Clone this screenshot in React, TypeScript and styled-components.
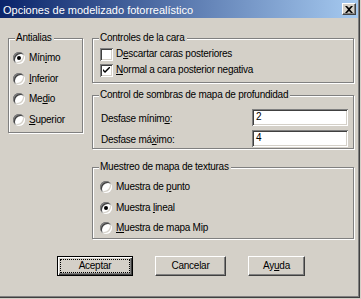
import React from "react";
import styled, { createGlobalStyle, css } from "styled-components";

const Global = createGlobalStyle`
  html, body { margin: 0; padding: 0; background: #d4d0c8; }
  body { font-family: "Liberation Sans", Arial, sans-serif; }
`;

const Window = styled.div`
  width: 361px;
  height: 299px;
  box-sizing: border-box;
  background: #d4d0c8;
  padding: 0 3px 3px 0;
  box-shadow: inset -1px -1px 0 #d4d0c8, inset -2px -2px 0 #404040, inset -3px -3px 0 #808080;
  display: flex;
  flex-direction: column;
  color: #000;
  font-size: 10px;
  letter-spacing: -0.25px;
`;

const TitleBar = styled.div`
  height: 18px;
  flex: none;
  display: flex;
  align-items: center;
  justify-content: space-between;
  padding: 0 2px 0 3px;
  background: linear-gradient(to right, #0a246a, #a6caf0);
`;

const Title = styled.span`
  color: #fff;
  font-size: 11px;
  letter-spacing: 0;
  line-height: 18px;
  padding-top: 1px;
`;

const CloseButton = styled.div`
  width: 14px;
  height: 12px;
  box-sizing: border-box;
  background: #d4d0c8;
  border: 1px solid;
  border-color: #fff #404040 #404040 #fff;
  box-shadow: inset -1px -1px 0 #808080;
  display: flex;
  align-items: center;
  justify-content: center;
`;

const Body = styled.div`
  flex: 1;
  display: flex;
  flex-direction: column;
`;

const Columns = styled.div`
  display: grid;
  grid-template-columns: 75px 262px;
  column-gap: 9px;
  align-items: start;
  padding: 20px 0 0 8px;
`;

const RightColumn = styled.div`
  display: flex;
  flex-direction: column;
`;

const GroupBox = styled.div<{ $h: number; $mt?: number }>`
  box-sizing: border-box;
  height: ${(p) => p.$h}px;
  margin-top: ${(p) => p.$mt ?? 0}px;
  border: 1px solid #808080;
  box-shadow: 1px 1px 0 #fff, inset 1px 1px 0 #fff;
  display: flex;
  flex-direction: column;
`;

const GroupTitle = styled.div`
  align-self: flex-start;
  margin: -7px 0 0 6px;
  padding: 0 2px 0 1px;
  height: 12px;
  line-height: 12px;
  background: #d4d0c8;
`;

const OptionList = styled.div<{ $pt: number; $pl: number; $row: number }>`
  display: flex;
  flex-direction: column;
  padding: ${(p) => p.$pt}px 0 0 ${(p) => p.$pl}px;
  & > * {
    height: ${(p) => p.$row}px;
  }
`;

const Option = styled.label`
  display: flex;
  align-items: center;
  gap: 4px;
  line-height: 12px;
  white-space: nowrap;
`;

const sunken = css`
  background: #fff;
  box-shadow: inset 1px 1px 0 #808080, inset -1px -1px 0 #fff,
    inset 2px 2px 0 #404040, inset -2px -2px 0 #d4d0c8;
`;

const RadioMark = styled.span<{ $on?: boolean }>`
  ${sunken};
  flex: none;
  width: 12px;
  height: 12px;
  border-radius: 50%;
  display: flex;
  align-items: center;
  justify-content: center;
  &::after {
    content: "";
    width: 4px;
    height: 4px;
    border-radius: 50%;
    background: ${(p) => (p.$on ? "#000" : "transparent")};
  }
`;

const CheckMark = styled.span`
  ${sunken};
  flex: none;
  width: 13px;
  height: 13px;
  display: flex;
  align-items: center;
  justify-content: center;
  margin-right: -1px;
`;

const FieldGrid = styled.div`
  display: grid;
  grid-template-columns: 1fr 96px;
  row-gap: 4px;
  align-items: center;
  padding: 8px 5px 0 8px;
`;

const FieldLabel = styled.span`
  line-height: 12px;
  padding-top: 3px;
`;

const TextInput = styled.div`
  ${sunken};
  height: 17px;
  box-sizing: border-box;
  padding: 0 0 0 4px;
  line-height: 16px;
  font-size: 10px;
`;

const ButtonRow = styled.div`
  display: flex;
  gap: 22px;
  padding: 17px 0 0 57px;
`;

const Button = styled.div<{ $w: number; $default?: boolean }>`
  width: ${(p) => p.$w}px;
  height: 20px;
  box-sizing: border-box;
  display: flex;
  align-items: center;
  justify-content: center;
  line-height: 12px;
  background: #d4d0c8;
  ${(p) =>
    p.$default
      ? css`
          border: 1px solid #000;
          box-shadow: inset 1px 1px 0 #fff, inset -1px -1px 0 #404040,
            inset -2px -2px 0 #808080;
          outline: 1px dotted #000;
          outline-offset: -4px;
        `
      : css`
          border: 1px solid;
          border-color: #fff #404040 #404040 #fff;
          box-shadow: inset -1px -1px 0 #808080;
        `}
`;

const Check = () => (
  <svg width="7" height="7" viewBox="0 0 7 7">
    <path d="M0 2 L0 4 L2 6 L7 1 L7 -1 L2 4 Z" fill="#000" />
  </svg>
);

const CloseIcon = () => (
  <svg width="8" height="7" viewBox="0 0 8 7">
    <path d="M0 0h2l2 2 2-2h2L5 3.5 8 7H6L4 5 2 7H0l3-3.5z" fill="#000" />
  </svg>
);

export default function App() {
  return (
    <>
      <Global />
      <Window>
        <TitleBar>
          <Title>Opciones de modelizado fotorrealístico</Title>
          <CloseButton>
            <CloseIcon />
          </CloseButton>
        </TitleBar>
        <Body>
          <Columns>
            <GroupBox $h={95}>
              <GroupTitle>Antialias</GroupTitle>
              <OptionList $pt={3.6} $pl={4} $row={20.7}>
                <Option>
                  <RadioMark $on />
                  <span>
                    Mín<u>i</u>mo
                  </span>
                </Option>
                <Option>
                  <RadioMark />
                  <span>
                    <u>I</u>nferior
                  </span>
                </Option>
                <Option>
                  <RadioMark />
                  <span>
                    Me<u>d</u>io
                  </span>
                </Option>
                <Option>
                  <RadioMark />
                  <span>
                    <u>S</u>uperior
                  </span>
                </Option>
              </OptionList>
            </GroupBox>
            <RightColumn>
              <GroupBox $h={45}>
                <GroupTitle>Controles de la cara</GroupTitle>
                <OptionList $pt={2} $pl={7} $row={16}>
                  <Option>
                    <CheckMark />
                    <span>
                      D<u>e</u>scartar caras posteriores
                    </span>
                  </Option>
                  <Option>
                    <CheckMark>
                      <Check />
                    </CheckMark>
                    <span>
                      <u>N</u>ormal a cara posterior negativa
                    </span>
                  </Option>
                </OptionList>
              </GroupBox>
              <GroupBox $h={54} $mt={12}>
                <GroupTitle>Control de sombras de mapa de profundidad</GroupTitle>
                <FieldGrid>
                  <FieldLabel>
                    Desfase mínim<u>o</u>:
                  </FieldLabel>
                  <TextInput>2</TextInput>
                  <FieldLabel>
                    Desfase má<u>x</u>imo:
                  </FieldLabel>
                  <TextInput>4</TextInput>
                </FieldGrid>
              </GroupBox>
              <GroupBox $h={72} $mt={18}>
                <GroupTitle>Muestreo de mapa de texturas</GroupTitle>
                <OptionList $pt={3.75} $pl={7} $row={20.5}>
                  <Option>
                    <RadioMark />
                    <span>
                      Muestra de <u>p</u>unto
                    </span>
                  </Option>
                  <Option>
                    <RadioMark $on />
                    <span>
                      Muestra <u>l</u>ineal
                    </span>
                  </Option>
                  <Option>
                    <RadioMark />
                    <span>
                      <u>M</u>uestra de mapa Mip
                    </span>
                  </Option>
                </OptionList>
              </GroupBox>
            </RightColumn>
          </Columns>
          <ButtonRow>
            <Button $w={76} $default>
              Aceptar
            </Button>
            <Button $w={71}>Cancelar</Button>
            <Button $w={57}>
              Ay<u>u</u>da
            </Button>
          </ButtonRow>
        </Body>
      </Window>
    </>
  );
}
